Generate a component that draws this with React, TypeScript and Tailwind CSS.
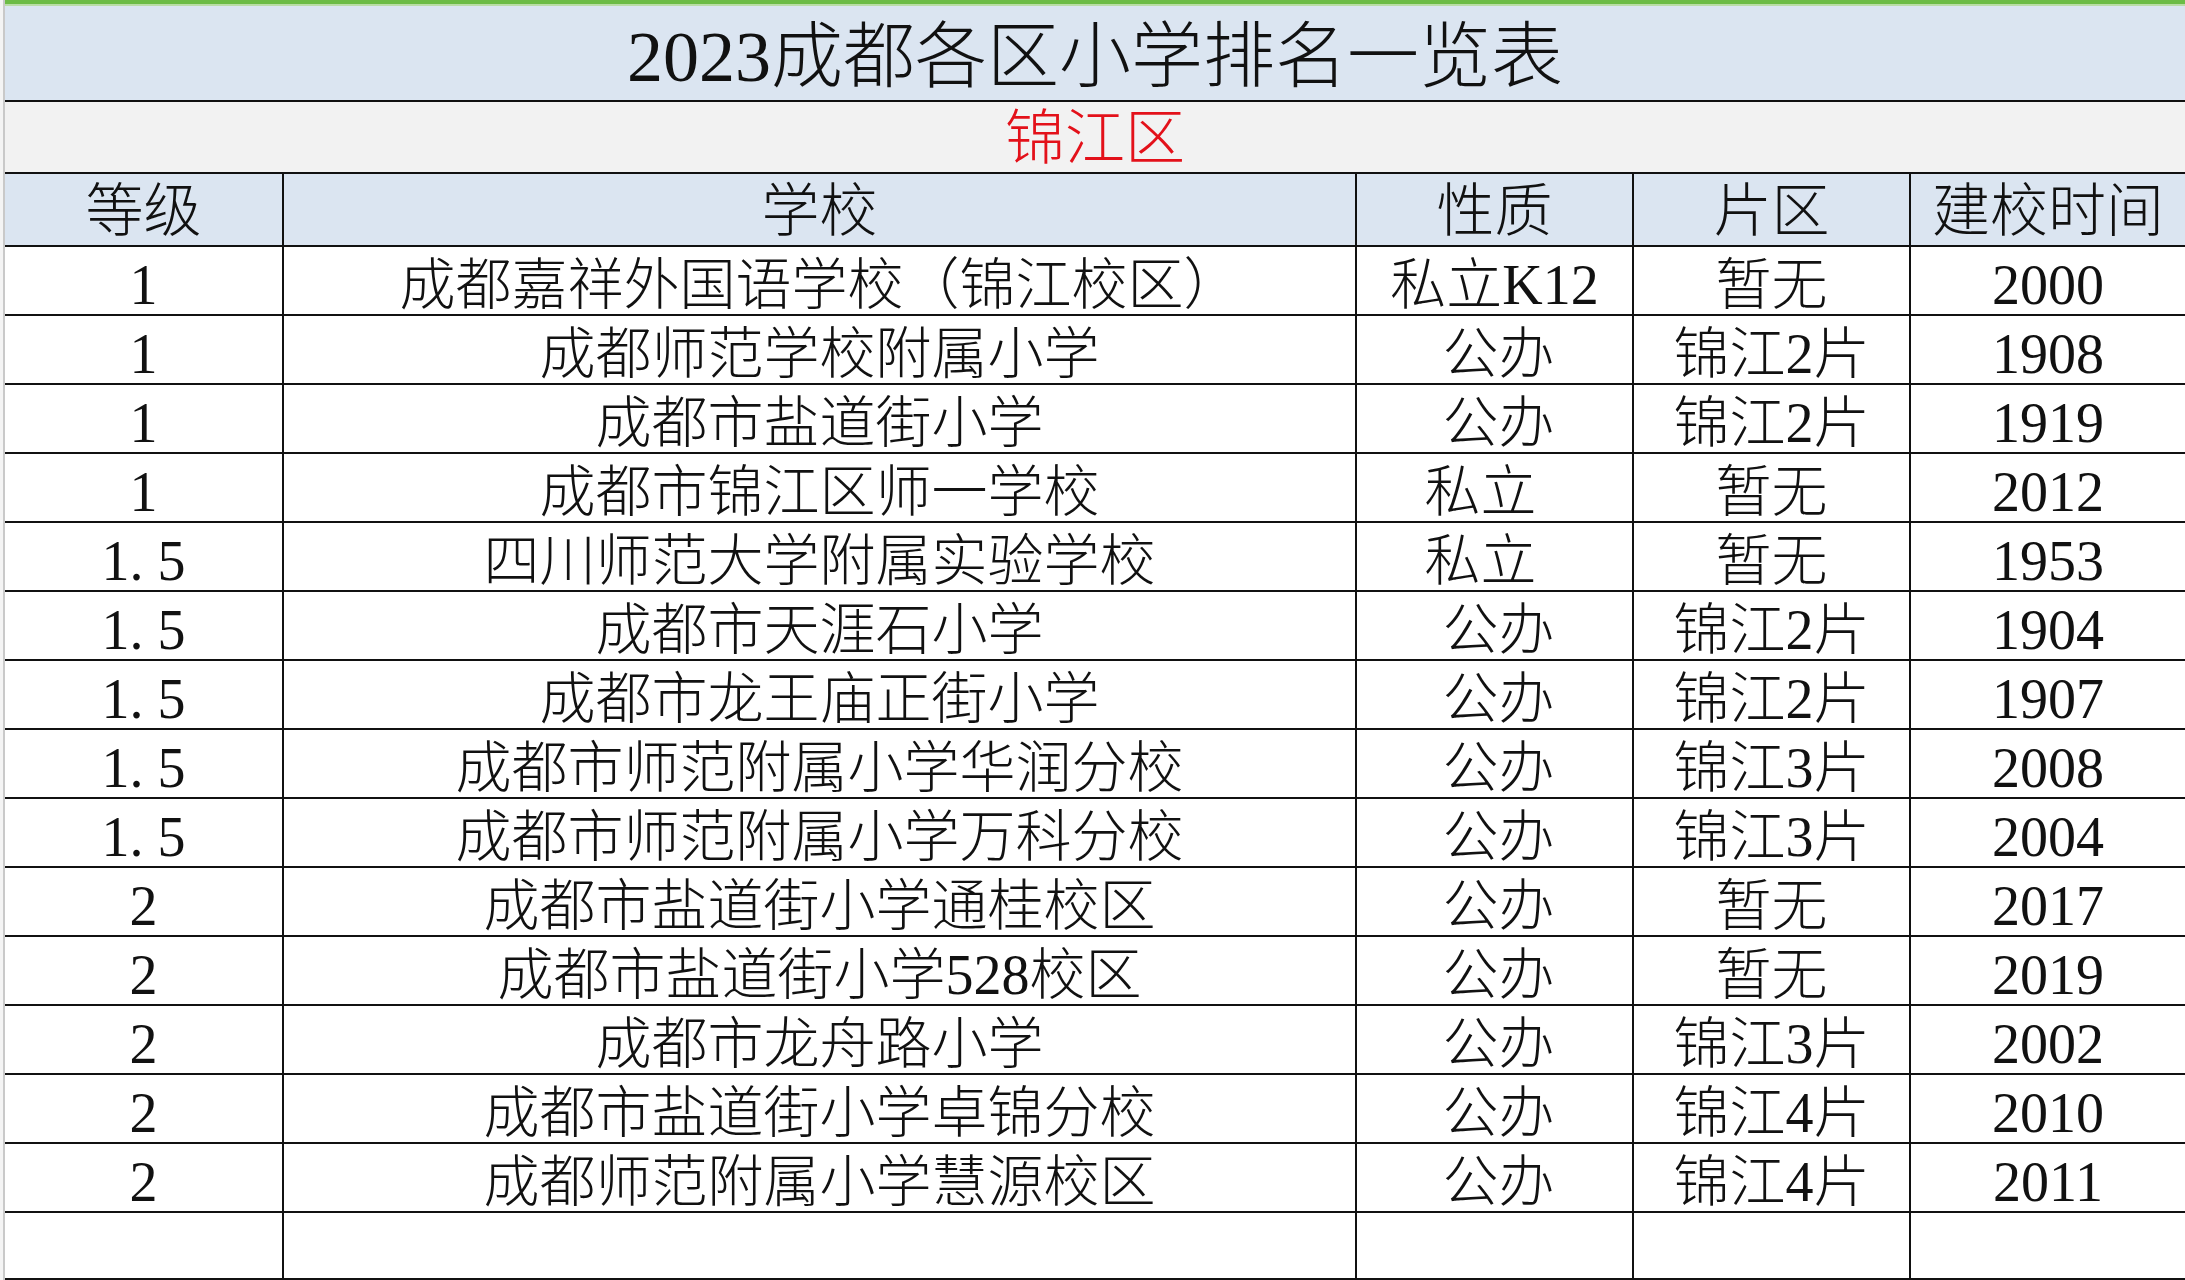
import React from "react";

type Row = { lv: string; name: string; kind: string; area: string; year: string };

const rows: Row[] = [
  { lv: "1", name: "成都嘉祥外国语学校（锦江校区）", kind: "私立K12", area: "暂无", year: "2000" },
  { lv: "1", name: "成都师范学校附属小学", kind: "公办", area: "锦江2片", year: "1908" },
  { lv: "1", name: "成都市盐道街小学", kind: "公办", area: "锦江2片", year: "1919" },
  { lv: "1", name: "成都市锦江区师一学校", kind: "私立", area: "暂无", year: "2012" },
  { lv: "1.5", name: "四川师范大学附属实验学校", kind: "私立", area: "暂无", year: "1953" },
  { lv: "1.5", name: "成都市天涯石小学", kind: "公办", area: "锦江2片", year: "1904" },
  { lv: "1.5", name: "成都市龙王庙正街小学", kind: "公办", area: "锦江2片", year: "1907" },
  { lv: "1.5", name: "成都市师范附属小学华润分校", kind: "公办", area: "锦江3片", year: "2008" },
  { lv: "1.5", name: "成都市师范附属小学万科分校", kind: "公办", area: "锦江3片", year: "2004" },
  { lv: "2", name: "成都市盐道街小学通桂校区", kind: "公办", area: "暂无", year: "2017" },
  { lv: "2", name: "成都市盐道街小学528校区", kind: "公办", area: "暂无", year: "2019" },
  { lv: "2", name: "成都市龙舟路小学", kind: "公办", area: "锦江3片", year: "2002" },
  { lv: "2", name: "成都市盐道街小学卓锦分校", kind: "公办", area: "锦江4片", year: "2010" },
  { lv: "2", name: "成都师范附属小学慧源校区", kind: "公办", area: "锦江4片", year: "2011" },
];

const font = "font-['Liberation_Serif','Noto_Sans_CJK_SC',serif]";

function Level({ v }: { v: string }) {
  if (v.includes(".")) {
    const [a, b] = v.split(".");
    return (
      <span>
        {a}
        <span className="inline-block w-[0.5em]">.</span>
        {b}
      </span>
    );
  }
  return <span>{v}</span>;
}

const grid = "grid grid-cols-[279px_1073px_277px_277px_1fr]";
const cellBase = "flex items-center justify-center border-r-2 border-[#111]";

export default function App() {
  return (
    <div className={`w-[2185px] h-[1280px] bg-white flex flex-row overflow-hidden text-[#111] ${font} font-light`}>
      <div className="w-[3px] bg-[#f4f4f4]" />
      <div className="w-[2px] bg-[#c9c9c9]" />
      <div className="flex-1 flex flex-col">
        <div className="h-[4px] bg-[#6cbc46]" />
        <div className="h-[2px] bg-[#b9dda6]" />
        {/* Title */}
        <div className="h-[96px] bg-[#dbe5f1] flex items-center justify-center border-b-2 border-[#111] pt-[8px]">
          <span className="text-[72px] leading-none">2023成都各区小学排名一览表</span>
        </div>
        {/* District */}
        <div className="h-[72px] bg-[#f2f2f2] flex items-center justify-center border-b-2 border-[#111] pt-[4px]">
          <span className="text-[60px] leading-none text-[#e3111a]">锦江区</span>
        </div>
        {/* Header */}
        <div className={`${grid} h-[73px] bg-[#dbe5f1] border-b-2 border-[#111] text-[58px] leading-none`}>
          <div className={`${cellBase} pt-[4px]`}>等级</div>
          <div className={`${cellBase} pt-[4px]`}>学校</div>
          <div className={`${cellBase} pt-[4px]`}>性质</div>
          <div className={`${cellBase} pt-[4px]`}>片区</div>
          <div className="flex items-center justify-center pt-[4px]">建校时间</div>
        </div>
        {/* Rows */}
        {rows.map((r, i) => (
          <div key={i} className={`${grid} h-[69px] border-b-2 border-[#111] text-[56px] leading-none`}>
            <div className={`${cellBase} pt-[8px]`}>
              <Level v={r.lv} />
            </div>
            <div className={`${cellBase} pt-[8px] whitespace-nowrap`}>{r.name}</div>
            <div
              className={`${cellBase} pt-[8px] ${r.kind === "公办" ? "pl-[8px]" : r.kind === "私立" ? "pr-[28px]" : ""}`}
            >
              {r.kind}
            </div>
            <div className={`${cellBase} pt-[8px]`}>{r.area}</div>
            <div className="flex items-center justify-center pt-[8px]">{r.year}</div>
          </div>
        ))}
        <div className={`${grid} flex-1 border-b-2 border-[#111]`}>
          <div className={cellBase} />
          <div className={cellBase} />
          <div className={cellBase} />
          <div className={cellBase} />
          <div />
        </div>
      </div>
    </div>
  );
}
